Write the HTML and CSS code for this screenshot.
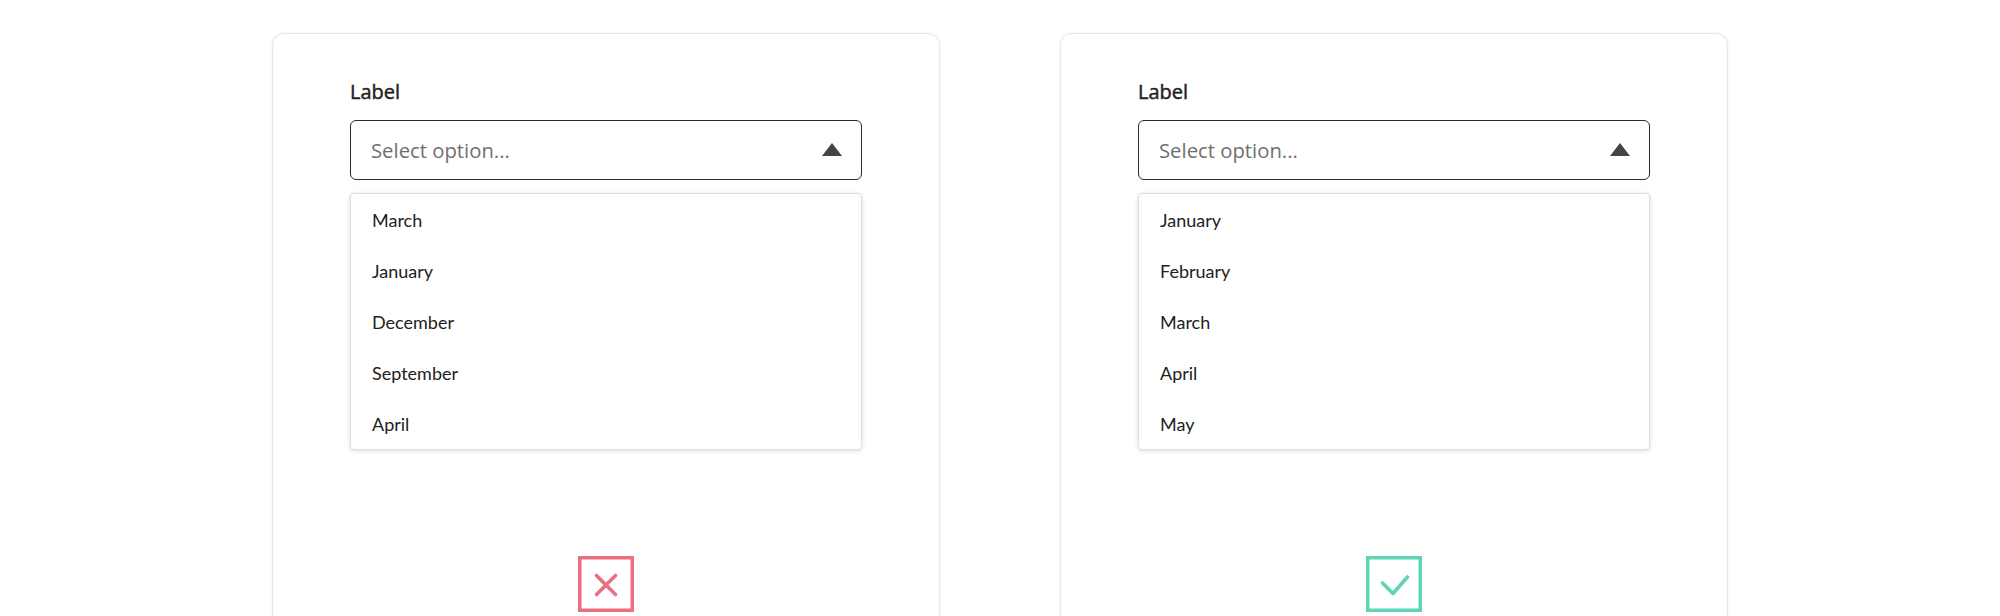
FILE: index.html
```html
<!DOCTYPE html>
<html lang="en">
<head>
<meta charset="utf-8">
<title>Select dropdown ordering</title>
<link rel="stylesheet" href="styles.css">
</head>
<body>
<main class="page">
  <section class="card">
    <div class="field">
      <div class="label">Label</div>
      <div class="select">
        <span class="placeholder">Select option...</span>
        <span class="caret"></span>
      </div>
      <ul class="menu">
        <li>March</li>
        <li>January</li>
        <li>December</li>
        <li>September</li>
        <li>April</li>
      </ul>
    </div>
    <div class="verdict">
      <svg class="mark mark-bad" width="56" height="56" viewBox="0 0 56 56">
        <rect x="1.75" y="1.75" width="52.5" height="52.5" fill="none" stroke="currentColor" stroke-width="3.5"/>
        <path d="M18.5 19.5 L37.5 38.5 M37.5 19.5 L18.5 38.5" fill="none" stroke="currentColor" stroke-width="3.6" stroke-linecap="round"/>
      </svg>
    </div>
  </section>
  <section class="card">
    <div class="field">
      <div class="label">Label</div>
      <div class="select">
        <span class="placeholder">Select option...</span>
        <span class="caret"></span>
      </div>
      <ul class="menu">
        <li>January</li>
        <li>February</li>
        <li>March</li>
        <li>April</li>
        <li>May</li>
      </ul>
    </div>
    <div class="verdict">
      <svg class="mark mark-good" width="56" height="56" viewBox="0 0 56 56">
        <rect x="1.75" y="1.75" width="52.5" height="52.5" fill="none" stroke="currentColor" stroke-width="3.5"/>
        <path d="M16.5 27 L27 37.5 L41.5 21" fill="none" stroke="currentColor" stroke-width="3.6" stroke-linecap="round" stroke-linejoin="round"/>
      </svg>
    </div>
  </section>
</main>
</body>
</html>
```

FILE: styles.css
```css
html, body {
  margin: 0;
  padding: 0;
  background: #ffffff;
  overflow: hidden;
}

.page {
  display: flex;
  justify-content: center;
  gap: 120px;
  padding-top: 33px;
  height: 616px;
  box-sizing: border-box;
}

.card {
  width: 668px;
  height: 720px;
  box-sizing: border-box;
  border: 1px solid #e8e8e8;
  border-radius: 12px;
  box-shadow: 0 0 3px rgba(0, 0, 0, 0.07);
  padding: 44px 77px 0;
  display: flex;
  flex-direction: column;
  background: #fff;
}

.label {
  font-family: "Open Sans", "Noto Sans", sans-serif;
  font-weight: 400;
  -webkit-text-stroke: 0.45px #222;
  font-size: 20px;
  line-height: 28px;
  color: #222;
  margin-bottom: 14px;
}

.select {
  height: 60px;
  box-sizing: border-box;
  border: 1.5px solid #2b2b2b;
  border-radius: 6px;
  padding: 0 19px 0 20px;
  display: flex;
  align-items: center;
  justify-content: space-between;
}

.placeholder {
  font-family: "Open Sans", "Noto Sans", sans-serif;
  font-size: 20.3px;
  color: #6f6f6f;
}

.caret {
  width: 0;
  height: 0;
  border-left: 10px solid transparent;
  border-right: 10px solid transparent;
  border-bottom: 13px solid #444;
  margin-top: -1px;
}

.menu {
  list-style: none;
  margin: 13px 0 0;
  padding: 0;
  border: 1px solid #dedede;
  border-radius: 4px;
  box-shadow: 0 1px 4px rgba(0, 0, 0, 0.14);
}

.menu li {
  height: 51px;
  display: flex;
  align-items: center;
  padding: 0 21px;
  font-family: "Lato", "Noto Sans", sans-serif;
  font-size: 18px;
  color: #222;
}

.verdict {
  display: flex;
  justify-content: center;
  margin-top: 106px;
}

.mark {
  display: block;
}

.mark-bad {
  color: #ec6f80;
}

.mark-good {
  color: #5dd5b6;
}
```
